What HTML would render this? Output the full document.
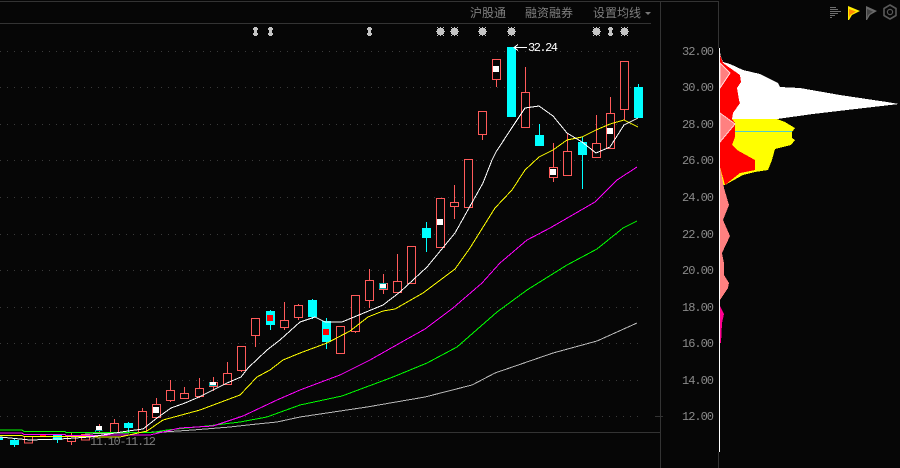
<!DOCTYPE html>
<html><head><meta charset="utf-8"><style>
html,body{margin:0;padding:0;background:#060606;width:900px;height:468px;overflow:hidden}
svg{display:block}
text{font-family:"Liberation Mono",monospace}
.cn{font-family:"Liberation Sans","Noto Sans CJK SC",sans-serif;font-size:12px;fill:#7f7f7f}
.ax{font-size:12px;fill:#8a8a8a}
</style></head><body>
<svg width="900" height="468" viewBox="0 0 900 468" xmlns="http://www.w3.org/2000/svg">
<rect width="900" height="468" fill="#060606"/>
<g shape-rendering="crispEdges">
<path d="M0 1.5H718M0 23.5H651M660.5 2V468M718.5 1V48M718.5 452V468M85 432.5H660M655 416.5H663" stroke="#333" fill="none"/>
<path d="M0 51.5H640M0 87.5H640M0 124.5H640M0 160.5H640M0 197.5H640M0 234.5H640M0 270.5H640M0 307.5H640M0 343.5H640M0 380.5H640M0 416.5H640" stroke="#3a3a3a" stroke-dasharray="1 6" fill="none"/>
</g>
<text class="cn" x="470" y="17">沪股通</text>
<text class="cn" x="525" y="17">融资融券</text>
<text class="cn" x="593" y="17">设置均线</text>
<path d="M645 12h6l-3 3z" fill="#777"/>

<!-- top markers -->
<g fill="#c4c4c4" shape-rendering="crispEdges">
<path d="M254 27h3v1h1v2h-1v3h1v2h-1v1h-3v-1h-1v-2h1v-3h-1v-2h1z"/>
<path d="M269 27h3v1h1v2h-1v3h1v2h-1v1h-3v-1h-1v-2h1v-3h-1v-2h1z"/>
<path d="M368 27h3v1h1v2h-1v3h1v2h-1v1h-3v-1h-1v-2h1v-3h-1v-2h1z"/>
<path d="M609 27h3v1h1v2h-1v3h1v2h-1v1h-3v-1h-1v-2h1v-3h-1v-2h1z"/>
<g id="s">
<path d="M437 29h7v5h-7zM438 28h5v7h-5zM440 27h1v9h-1zM436 31h9v1h-9zM437 27h1v1h-1zM443 27h1v1h-1zM437 35h1v1h-1zM443 35h1v1h-1z"/>
</g>
<use href="#s" x="14"/><use href="#s" x="42"/><use href="#s" x="71"/><use href="#s" x="156"/><use href="#s" x="184"/>
</g>

<g shape-rendering="crispEdges">
<!-- left clutter -->
<rect x="10" y="440" width="9" height="5" fill="#0ff"/>
<path d="M14.5 438V447" stroke="#0ff"/>
<rect x="0" y="437" width="3" height="3" fill="#0ff"/>
<rect x="24.5" y="436.5" width="8" height="6.5" fill="#060606" stroke="#ff5a5a"/>
<rect x="40" y="434" width="6" height="3" fill="#f00"/>
<rect x="53" y="434" width="9" height="6" fill="#0ff"/>
<path d="M57.5 440V443" stroke="#0ff"/>
<rect x="67.5" y="436.5" width="8" height="5" fill="#060606" stroke="#ff5a5a"/>
<path d="M71.5 432V437M71.5 442V445" stroke="#ff5a5a"/>
<rect x="81.5" y="434.5" width="8" height="5.5" fill="#060606" stroke="#ff5a5a"/>

<!-- red wicks -->
<path stroke="#ff5a5a" fill="none" d="M99.5 424V433M114.5 419V424M142.5 408V411M156.5 398V404M170.5 380V390M170.5 400V402M184.5 387V393M199.5 378V388M199.5 396V398M213.5 377V391M227.5 362V373M241.5 370V372M255.5 335V347M284.5 302V330M298.5 304V320M355.5 331V333M369.5 269V308M383.5 274V294M397.5 254V281M454.5 185V219M482.5 134V140M496.5 79V87M525.5 67V92M553.5 143V182M567.5 133V151M596.5 115V143M610.5 97V113M624.5 109V120"/>
<!-- red bodies -->
<g fill="#060606" stroke="#ff5a5a">
<rect x="110.5" y="423.5" width="8" height="9"/>
<rect x="138.5" y="411.5" width="8" height="21"/>
<rect x="152.5" y="404.5" width="8" height="13"/>
<rect x="166.5" y="390.5" width="8" height="10"/>
<rect x="180.5" y="393.5" width="8" height="5"/>
<rect x="195.5" y="388.5" width="8" height="8"/>
<rect x="209.5" y="382.5" width="8" height="4"/>
<rect x="223.5" y="373.5" width="8" height="11"/>
<rect x="237.5" y="346.5" width="8" height="24"/>
<rect x="251.5" y="318.5" width="8" height="17"/>
<rect x="280.5" y="320.5" width="8" height="7"/>
<rect x="294.5" y="305.5" width="8" height="12"/>
<rect x="336.5" y="326.5" width="8" height="27"/>
<rect x="351.5" y="295.5" width="8" height="36"/>
<rect x="365.5" y="280.5" width="8" height="20"/>
<rect x="379.5" y="283.5" width="8" height="6"/>
<rect x="393.5" y="281.5" width="8" height="11"/>
<rect x="407.5" y="246.5" width="8" height="37"/>
<rect x="436.5" y="198.5" width="8" height="49"/>
<rect x="450.5" y="202.5" width="8" height="4"/>
<rect x="464.5" y="159.5" width="8" height="48"/>
<rect x="478.5" y="111.5" width="8" height="23"/>
<rect x="492.5" y="59.5" width="8" height="20"/>
<rect x="521.5" y="92.5" width="8" height="35"/>
<rect x="549.5" y="167.5" width="8" height="10"/>
<rect x="563.5" y="151.5" width="8" height="24"/>
<rect x="592.5" y="143.5" width="8" height="14"/>
<rect x="606.5" y="113.5" width="8" height="35"/>
<rect x="620.5" y="61.5" width="8" height="48"/>
</g>
<!-- cyan -->
<path stroke="#0ff" fill="none" d="M128.5 422V432M270.5 310V330M312.5 299V319M326.5 318V349M426.5 222V252M539.5 124V135M582.5 137V189M638.5 84V90"/>
<g fill="#0ff">
<rect x="124" y="423" width="9" height="5"/>
<rect x="266" y="311" width="9" height="14"/>
<rect x="308" y="300" width="9" height="17"/>
<rect x="322" y="321" width="9" height="21"/>
<rect x="422" y="228" width="9" height="10"/>
<rect x="507" y="47" width="9" height="70"/>
<rect x="535" y="135" width="9" height="11"/>
<rect x="578" y="142" width="9" height="13"/>
<rect x="634" y="87" width="9" height="31"/>
</g>
<!-- inner squares -->
<g fill="#fff">
<rect x="153" y="407" width="6" height="6"/>
<rect x="493" y="66" width="6" height="6"/>
<rect x="437" y="219" width="6" height="6"/>
<rect x="550" y="169" width="6" height="6"/>
<rect x="607" y="128" width="6" height="6"/>
<rect x="380" y="284" width="6" height="4"/>
<rect x="210" y="382" width="6" height="3"/>
<rect x="96" y="426" width="6" height="4"/>
</g>
<path d="M379.5 283.5V288.5H386.5M379.5 283.5H386.5M209.5 385.5H216.5M209.5 382.5V386M95.5 430.5H102.5M95.5 430V433" stroke="#0aa" fill="none"/>
<rect x="267" y="315" width="6" height="6" fill="#f00"/>
<rect x="323" y="329" width="6" height="6" fill="#f00"/>

<!-- MA lines -->
<g fill="none">
<polyline stroke="#b8b8b8" points="85,434 118,433 163,432 193,430 230,427 257,424 277,422 300,417 367,407 425,397 472,385 495,373 553,353 597,341 637,323"/>
<polyline stroke="#00ff00" points="0,430 22,430 24,431.5 65,431.5 66,432.5 152,432.5 167,430 207,426 240,422 267,417 300,405 342,396 393,377 427,363 457,347 497,312 527,290 567,265 597,249 623,228 637,221"/>
<polyline stroke="#ff00ff" points="0,433 22,433 24,434.5 65,434.5 66,435.5 150,435 180,428 213,426 243,416 277,400 300,390 340,375 370,360 400,343 425,329 453,308 482,283 500,263 527,240 550,228 595,202 617,180 637,167"/>
<polyline stroke="#ffff00" points="0,435.5 22,435.5 24,436.5 65,436.5 120,437 147,431 163,420 200,410 240,395 257,377 270,370 283,360 300,353 327,343 350,331 368,317 383,311 395,309 423,293 455,269 470,248 495,208 512,190 525,170 539,157 553,150 567,140 582,137 596,130 610,124 624,120 638,127"/>
<polyline stroke="#ffffff" points="0,437 30,440 60,439 90,437 128,431 143,429 157,418 171,408 185,403 199,397 213,390 227,383 241,377 248,368 267,350 280,340 300,322 315,317 325,322 342,322 383,305 400,292 427,267 455,233 483,183 492,160 496,152 511,129 525,108 539,106 553,116 567,133 582,142 596,153 610,147 624,125 638,118"/>
</g>
</g>

<text x="90" y="445" font-size="12" fill="#7c7c7c" textLength="66" lengthAdjust="spacing">11.10-11.12</text>

<!-- peak label -->
<path d="M527 47.5H514M518 44.5L514 47.5L518 50.5" stroke="#fff" fill="none" shape-rendering="crispEdges"/>
<text x="528" y="51" font-size="12" fill="#fff" textLength="30" lengthAdjust="spacing">32.24</text>

<!-- axis -->
<g class="ax">
<text class="ax" x="682" y="55" textLength="32">32.00</text>
<text class="ax" x="682" y="91" textLength="32">30.00</text>
<text class="ax" x="682" y="128" textLength="32">28.00</text>
<text class="ax" x="682" y="164" textLength="32">26.00</text>
<text class="ax" x="682" y="201" textLength="32">24.00</text>
<text class="ax" x="682" y="238" textLength="32">22.00</text>
<text class="ax" x="682" y="274" textLength="32">20.00</text>
<text class="ax" x="682" y="311" textLength="32">18.00</text>
<text class="ax" x="682" y="347" textLength="32">16.00</text>
<text class="ax" x="682" y="384" textLength="32">14.00</text>
<text class="ax" x="682" y="420" textLength="32">12.00</text>
</g>

<!-- chip distribution -->
<g shape-rendering="crispEdges">
<polygon fill="#fff" points="719,48 721,57 723,62 730,64 743,70 760,74 768,78 778,83 780,87 800,88 840,95 887,102 899,104 873,107 847,110 813,114 777,119 719,120"/>
<polygon fill="#ff0" points="719,119 777,119 785,122 795,128 792,132 792,138 795,140 791,145 775,149 772,160 768,170 755,172 743,175 725,185 719,186"/>
<polygon fill="#f00" points="720,55 723,63 730,68 740,75 741,82 737,88 739,100 740,103 733,113 732,119 735,123 735,137 732,145 737,150 755,160 755,170 740,173 725,185 720,167"/>
<polygon fill="#ff8080" stroke="#ffd0d0" points="720,63 730,73 720,88"/>
<polygon fill="#ff8080" stroke="#ffd0d0" points="720,113 735,124 720,142"/>
<polygon fill="#ff8080" points="720,167 724,188 729,205 723,220 730,236 722,253 724,263 724,275 729,283 728,288 722,297 720,300"/>
<polygon fill="#ff0090" points="720,306 724,314 722,323 721,343 720,343"/>
<path d="M735 131.5H792" stroke="#55cccc"/>
<path d="M719.5 48V452" stroke="#fff"/>
</g>

<!-- top-right icons -->
<g shape-rendering="crispEdges" stroke="#6f6f6f" fill="none">
<path d="M830 7.5H836M830 9.5H838M830 11.5H841M830 13.5H838M830 15.5H835M830 17.5H832"/>
</g>
<polygon points="848,6 860,11 852,15 849,20 848,20" fill="#ffee00"/>
<polygon points="849,9 856,11.5 850,15 849,18" fill="#ff8a00"/>
<polygon points="866,6 877,11 870,15 867,20 866,20" fill="#6a6a6a"/>
<polygon points="867,9 873,11.5 868,15 867,18" fill="#444"/>
<polygon points="890,5 896,8.5 896,15.5 890,19 884,15.5 884,8.5" fill="none" stroke="#5a5a5a" stroke-width="1.6" stroke-linejoin="round"/>
<circle cx="890" cy="12" r="2.6" fill="none" stroke="#5a5a5a" stroke-width="1.2"/>
</svg>
</body></html>
